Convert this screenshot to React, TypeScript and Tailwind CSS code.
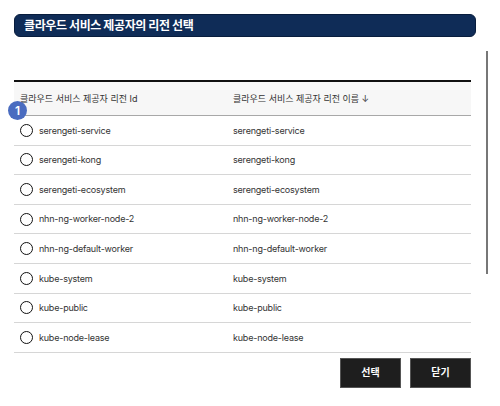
const rows = [
  "serengeti-service",
  "serengeti-kong",
  "serengeti-ecosystem",
  "nhn-ng-worker-node-2",
  "nhn-ng-default-worker",
  "kube-system",
  "kube-public",
  "kube-node-lease",
];

export default function App() {
  return (
    <div
      className="relative h-[406px] w-[500px] bg-white text-[#222]"
      style={{ fontFamily: '"Inter", "Noto Sans CJK KR", sans-serif' }}
    >
      {/* Title */}
      <div className="absolute left-[14px] top-[14px] flex h-[23px] w-[462px] items-center rounded-[6px] border border-[#081d3d] bg-[#0f2c57] pl-[9px]">
        <span className="text-[12px] font-bold tracking-[-0.4px] text-white">
          클라우드 서비스 제공자의 리전 선택
        </span>
      </div>

      {/* scrollbar */}
      <div className="absolute left-[486px] top-[51px] h-[223px] w-[2px] bg-[#777]" />

      {/* Table */}
      <div className="absolute left-[14px] top-[80px] w-[457px]">
        <div className="flex h-[36px] items-center border-t-2 border-b border-t-[#111] border-b-[#a8a8a8] bg-[#f7f7f7] text-[9px] text-[#333]">
          <div className="w-[219px] pl-[6px]">클라우드 서비스 제공자 리전 Id</div>
          <div className="flex-1">클라우드 서비스 제공자 리전 이름 ↓</div>
        </div>
        {rows.map((r) => (
          <div
            key={r}
            className="flex h-[29.6px] items-center border-b border-[#d6d6d6] text-[9px] tracking-[-0.2px] text-[#333]"
          >
            <div className="flex w-[219px] items-center pl-[6px]">
              <span className="mr-[6px] h-[13px] w-[13px] rounded-full border-[1.5px] border-[#111]" />
              <span>{r}</span>
            </div>
            <div className="flex-1">{r}</div>
          </div>
        ))}
        <div className="mt-[5px] flex justify-end gap-[9px]">
          <button className="h-[30px] w-[61px] border border-[#555] bg-[#1e1e1e] text-[10px] font-bold text-white">
            선택
          </button>
          <button className="h-[30px] w-[61px] border border-[#555] bg-[#1e1e1e] text-[10px] font-bold text-white">
            닫기
          </button>
        </div>
      </div>

      {/* badge */}
      <div className="absolute left-[8px] top-[101px] flex h-[19px] w-[19px] items-center justify-center rounded-full bg-[#4a6cc0] text-[12px] font-semibold text-white">
        1
      </div>
    </div>
  );
}
